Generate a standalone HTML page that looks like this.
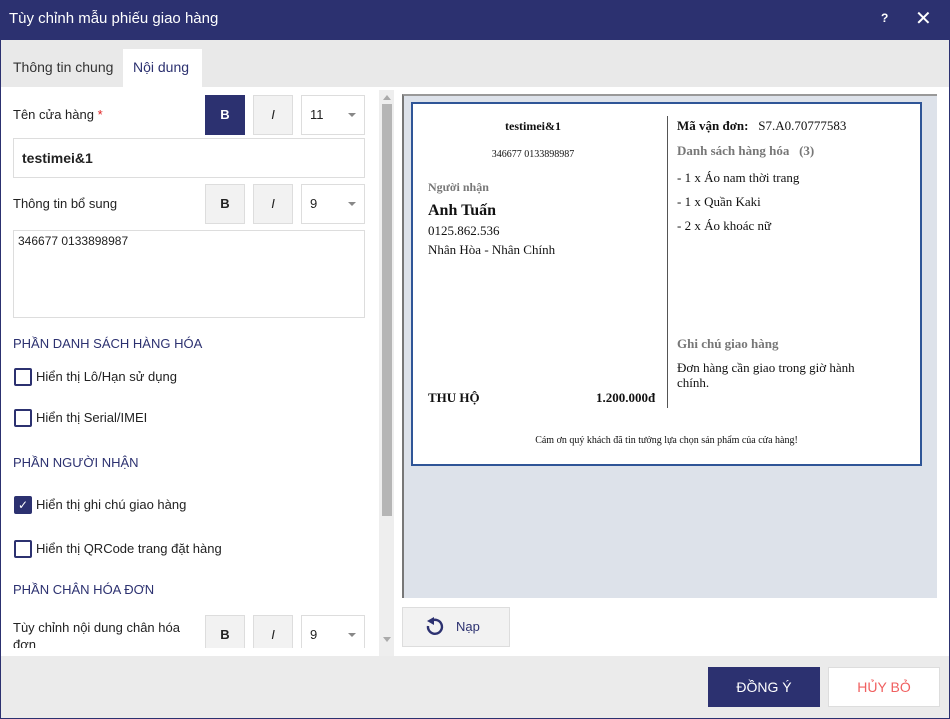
<!DOCTYPE html>
<html><head><meta charset="utf-8"><style>
*{box-sizing:border-box;margin:0;padding:0}
body{width:950px;height:719px;position:relative;overflow:hidden;background:#fff;font-family:"Liberation Sans","DejaVu Sans",sans-serif;font-size:13px;color:#222}
.a{position:absolute}
.serif{font-family:"Liberation Serif",serif}
.btn{position:absolute;border:1px solid #ddd;background:#f2f2f2;text-align:center;font-weight:bold;font-size:13px}
.sel{position:absolute;border:1px solid #ddd;background:#fff;padding-left:8px;font-size:13px}
.sel:after{content:"";position:absolute;right:8px;top:50%;margin-top:-2px;border-left:4px solid transparent;border-right:4px solid transparent;border-top:4px solid #888}
.cb{position:absolute;width:18px;height:18px;border:2px solid #2c3170;border-radius:2px;background:#fff}
.sec{position:absolute;color:#2c3170;font-size:13px;left:13px}
.lbl{position:absolute;font-size:13px;color:#222}
</style></head><body>
<div class="a" style="left:0;top:0;width:950px;height:719px;border:1px solid #2c3170;border-top:none"></div>
<div class="a" style="left:0;top:0;width:950px;height:40px;background:#2c3170"></div>
<div class="a" style="left:9px;top:10px;color:#fff;font-size:15px">Tùy chỉnh mẫu phiếu giao hàng</div>
<div class="a" style="left:881px;top:11px;color:#fff;font-size:12px;font-weight:bold">?</div>
<div class="a" style="left:915px;top:6px;color:#fff;font-size:20px;font-weight:bold">✕</div>
<div class="a" style="left:1px;top:40px;width:948px;height:47px;background:#e9e9e9"></div>
<div class="a" style="left:13px;top:59px;font-size:14px;color:#333">Thông tin chung</div>
<div class="a" style="left:123px;top:49px;width:79px;height:38px;background:#fff"></div>
<div class="a" style="left:133px;top:59px;font-size:14px;color:#2c3170">Nội dung</div>
<div class="a" style="left:1px;top:656px;width:948px;height:62px;background:#ebebeb"></div>

<div class="lbl" style="left:13px;top:107px">Tên cửa hàng <span style="color:#e02020">*</span></div>
<div class="btn" style="left:205px;top:95px;width:40px;height:40px;background:#2c3170;color:#fff;border-color:#2c3170;line-height:38px">B</div>
<div class="btn" style="left:253px;top:95px;width:40px;height:40px;line-height:38px;font-weight:normal;font-style:italic">I</div>
<div class="sel" style="left:301px;top:95px;width:64px;height:40px;line-height:38px">11</div>
<div class="a" style="left:13px;top:138px;width:352px;height:40px;border:1px solid #ddd;padding:11px 8px;font-weight:bold;font-size:14px">testimei&amp;1</div>
<div class="lbl" style="left:13px;top:196px">Thông tin bổ sung</div>
<div class="btn" style="left:205px;top:184px;width:40px;height:40px;line-height:38px">B</div>
<div class="btn" style="left:253px;top:184px;width:40px;height:40px;line-height:38px;font-weight:normal;font-style:italic">I</div>
<div class="sel" style="left:301px;top:184px;width:64px;height:40px;line-height:38px">9</div>
<div class="a" style="left:13px;top:230px;width:352px;height:88px;border:1px solid #ddd;padding:3px 4px;font-size:12px">346677 0133898987</div>

<div class="sec" style="top:336px">PHẦN DANH SÁCH HÀNG HÓA</div>
<div class="cb" style="left:14px;top:368px"></div><div class="lbl" style="left:36px;top:369px">Hiển thị Lô/Hạn sử dụng</div>
<div class="cb" style="left:14px;top:409px"></div><div class="lbl" style="left:36px;top:410px">Hiển thị Serial/IMEI</div>
<div class="sec" style="top:455px">PHẦN NGƯỜI NHẬN</div>
<div class="cb" style="left:14px;top:496px;background:#2c3170;color:#fff;font-size:12px;line-height:14px;text-align:center">✓</div><div class="lbl" style="left:36px;top:497px">Hiển thị ghi chú giao hàng</div>
<div class="cb" style="left:14px;top:540px"></div><div class="lbl" style="left:36px;top:541px">Hiển thị QRCode trang đặt hàng</div>
<div class="sec" style="top:582px">PHẦN CHÂN HÓA ĐƠN</div>
<div class="a" style="left:0;top:615px;width:378px;height:33px;overflow:hidden">
<div class="lbl" style="left:13px;top:4px;width:180px;line-height:17px">Tùy chỉnh nội dung chân hóa đơn</div>
<div class="btn" style="left:205px;top:0;width:40px;height:40px;line-height:38px">B</div>
<div class="btn" style="left:253px;top:0;width:40px;height:40px;line-height:38px;font-weight:normal;font-style:italic">I</div>
<div class="sel" style="left:301px;top:0;width:64px;height:40px;line-height:38px">9</div>
</div>
<div class="a" style="left:379px;top:90px;width:15px;height:566px;background:#eee"></div>
<div class="a" style="left:382px;top:104px;width:10px;height:412px;background:#b5b5b5"></div>
<div class="a" style="left:382px;top:95px;border-left:4px solid transparent;border-right:4px solid transparent;border-bottom:5px solid #aaa;margin-left:1px"></div>
<div class="a" style="left:383px;top:637px;border-left:4px solid transparent;border-right:4px solid transparent;border-top:5px solid #aaa"></div>

<div class="a" style="left:402px;top:94px;width:535px;height:504px;background:#dde2ea;border-left:2px solid #777;border-top:2px solid #999"></div>
<div class="a serif" style="left:411px;top:102px;width:511px;height:364px;background:#fff;border:2px solid #2f5597;color:#111">
<div class="a" style="left:0;top:15px;width:240px;text-align:center;font-weight:bold;font-size:12px">testimei&amp;1</div>
<div class="a" style="left:0;top:45px;width:240px;text-align:center;font-size:10px">346677 0133898987</div>
<div class="a" style="left:15px;top:76px;font-size:12px;color:#777;font-weight:bold">Người nhận</div>
<div class="a" style="left:15px;top:98px;font-size:16px;font-weight:bold">Anh Tuấn</div>
<div class="a" style="left:15px;top:119px;font-size:13px">0125.862.536</div>
<div class="a" style="left:15px;top:138px;font-size:13px">Nhân Hòa - Nhân Chính</div>
<div class="a" style="left:15px;top:286px;font-size:13px;font-weight:bold">THU HỘ</div>
<div class="a" style="left:183px;top:286px;font-size:13px;font-weight:bold">1.200.000đ</div>
<div class="a" style="left:254px;top:12px;width:1px;height:292px;background:#555"></div>
<div class="a" style="left:264px;top:14px;font-size:13px"><b>Mã vận đơn:</b>&nbsp;&nbsp; S7.A0.70777583</div>
<div class="a" style="left:264px;top:39px;font-size:13px;color:#777;font-weight:bold">Danh sách hàng hóa &nbsp;&nbsp;(3)</div>
<div class="a" style="left:264px;top:62px;font-size:13px;line-height:24px">- 1 x Áo nam thời trang<br>- 1 x Quần Kaki<br>- 2 x Áo khoác nữ</div>
<div class="a" style="left:264px;top:232px;font-size:13px;color:#777;font-weight:bold">Ghi chú giao hàng</div>
<div class="a" style="left:264px;top:256px;font-size:13px;width:200px;line-height:15px">Đơn hàng cần giao trong giờ hành chính.</div>
<div class="a" style="left:0;top:331px;width:507px;text-align:center;font-size:10px">Cám ơn quý khách đã tin tưởng lựa chọn sản phẩm của cửa hàng!</div>
</div>

<div class="a" style="left:402px;top:607px;width:108px;height:40px;background:#f2f2f2;border:1px solid #ddd"></div>
<svg class="a" style="left:423px;top:616px" width="22" height="22" viewBox="0 0 22 22"><path d="M8 5 A7 7 0 1 1 5 10" fill="none" stroke="#2c3170" stroke-width="2.4"/><path d="M4 5 L11 1 L11 9 Z" fill="#2c3170"/></svg>
<div class="a" style="left:456px;top:619px;color:#2c3170;font-size:13px">Nạp</div>

<div class="a" style="left:708px;top:667px;width:112px;height:40px;background:#2c3170;color:#fff;text-align:center;line-height:40px;font-size:14px">ĐỒNG Ý</div>
<div class="a" style="left:828px;top:667px;width:112px;height:40px;background:#fff;border:1px solid #ddd;color:#f06060;text-align:center;line-height:38px;font-size:14px">HỦY BỎ</div>
</body></html>
